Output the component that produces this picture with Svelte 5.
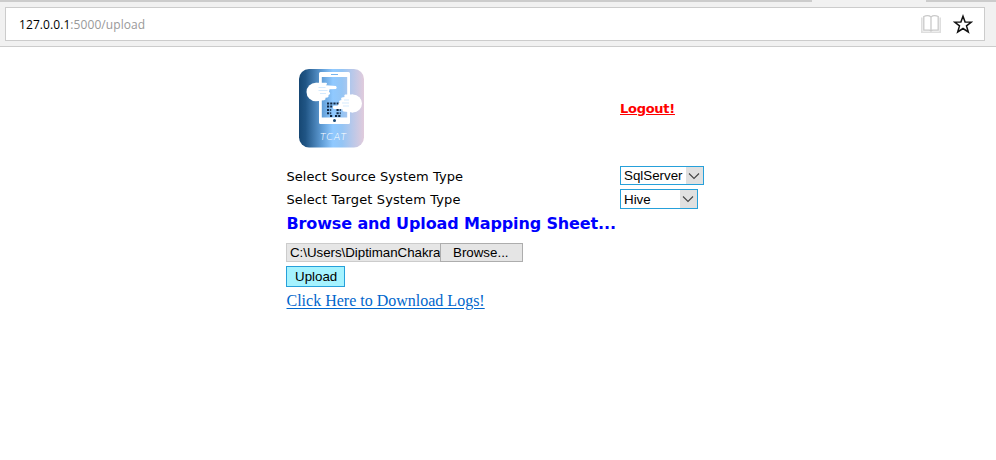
<script>
  const systems = [
    { label: 'Select Source System Type', value: 'SqlServer', kind: 'source' },
    { label: 'Select Target System Type', value: 'Hive', kind: 'target' }
  ];
</script>

<div class="page">
  <header>
    <div class="tabs"><span class="tab"></span></div>
    <div class="address">
      <span class="url"><span class="host">127.0.0.1</span><span class="path">:5000/upload</span></span>
      <svg class="book" width="20" height="20" viewBox="0 0 20 20" fill="none">
        <path d="M.8 3.500v14.700h18.400V3.500" stroke-width="1.600" stroke="#dedede" />
        <path d="M10 3Q8.500 1.700 6.500 1.700T2.800 2.500v13.700h5.500q1.200 0 1.700.8.500-.8 1.700-.8h5.500V2.500q-1.700-.8-3.700-.8T10 3zM10 3v14" stroke-width="1.300" stroke="#c9c9c9" />
      </svg>
      <svg class="star" width="20" height="20" viewBox="0 0 20 20">
        <path d="M10 2.200l2.100 5.700 6.300.2-4.900 3.800 1.800 6.100-5.300-3.500L4.700 18l1.800-6.100-4.900-3.800 6.300-.2z" fill="none" stroke="#111" stroke-width="1.500" />
      </svg>
    </div>
  </header>

  <main>
    <div class="top">
      <svg class="logo" width="65" height="79" viewBox="0 0 65 79">
        <defs>
          <linearGradient id="sheen">
            <stop offset="0" stop-color="#164773" />
            <stop offset=".1" stop-color="#205585" />
            <stop offset=".36" stop-color="#629fd8" />
            <stop offset=".52" stop-color="#90c9ff" />
            <stop offset=".66" stop-color="#94c5f5" />
            <stop offset="1" stop-color="#e1cbdc" />
          </linearGradient>
        </defs>
        <rect width="65" height="78.500" rx="10" fill="url(#sheen)" />
        <path fill-rule="evenodd" d="M21.500 3h28q1.500 0 1.500 1.500v49q0 1.500-1.500 1.500h-28q-1.500 0-1.500-1.500v-49Q20 3 21.500 3zM22.800 8v40.500h25.400V8z" fill="#fff" />
        <path d="M32 5.500h7" stroke="#77b4ed" />
        <circle cx="35.500" cy="51.500" r="1.500" fill="#194875" />
        <g fill="#fff">
          <circle cx="16.800" cy="23" r="9.300" />
          <path d="M17 13.700h10q1 0 1 1.300l-1 1.300 10 .7q1.500 1.800 0 3.100l-6.500.1-.5 2.700q2 .7.500 2.600l-1 .5q.5 2-1 2.500l-2 .2q.5 2-1.500 2.500L17 32z" />
          <circle cx="54" cy="34.500" r="9" />
          <path d="M54 25.500h-8q-1.500 1-.3 2.500l-3 .5q-1.500 1.500 0 2.500l-2 .4q-1.500 1.500 0 2.400l-1.700.5q-1.500 1.500 0 2.500h-4.500q-1.500 1.600 0 3.100l9 .3q-.5 2 1 2.300l9.500 1z" />
        </g>
        <path d="M28 34.400h11.500M28 37.600h5.200M28 41h4.200M28 44.200h4.200M37.500 41h4.200M37.500 44.200h4.200M31 47h2.500M36 47h5.500" stroke="#102641" stroke-width="2" stroke-dasharray="2.200 1" />
        <path d="M19.500 18.500h7M19.500 21.500h9M21 24.500h6M45 31h5M43 34h7M44 37h6" stroke="#b9dcfc" stroke-width=".6" />
        <text x="21" y="70.500" textLength="26">TCAT</text>
      </svg>
      <a class="logout" href="#logout">Logout!</a>
    </div>

    {#each systems as system}
      <div class="row">
        <span class="label {system.kind}-label">{system.label}</span>
        <button class="select {system.kind}">
          <span>{system.value}</span>
          <i><svg width="12" height="8" viewBox="0 0 12 8"><path d="M1 1.500l5 5 5-5" fill="none" stroke="#444" stroke-width="1.100" /></svg></i>
        </button>
      </div>
    {/each}

    <h1>Browse and Upload Mapping Sheet...</h1>
    <div class="file">
      <span class="filename">C:\Users\DiptimanChakra</span>
      <button class="browse">Browse...</button>
    </div>
    <button class="upload">Upload</button>
    <a class="logs" href="#logs">Click Here to Download Logs!</a>
  </main>
</div>

<style>
  :global(body) { margin: 0; background: #fff; }
  .page { width: 996px; height: 460px; overflow: hidden; background: #fff; }
  header { box-sizing: border-box; height: 47px; background: #f1f1f1; border-bottom: 1px solid #ccc; }
  .tabs { height: 2px; background: #ccc; padding-left: 812px; }
  .tab { display: block; width: 114px; height: 2px; background: #f1f1f1; }
  .address { box-sizing: border-box; display: flex; align-items: center; width: 980px; height: 34px; margin: 5px 0 0 5px; padding: 0 11px 0 13px; background: #fff; border: 1px solid #ccc; }
  .url { flex: 1; padding-top: 1px; font: 12px/18px "Open Sans", "Noto Sans", sans-serif; letter-spacing: .08px; }
  .host { color: #000; }
  .path { color: #999; }
  .star { margin-left: 12px; }
  button { box-sizing: border-box; margin: 0; padding: 0; border-radius: 0; color: #000; font: 13.333px/17px "Liberation Sans", Arial, sans-serif; text-align: left; white-space: nowrap; }
  main { display: flex; flex-direction: column; align-items: flex-start; padding: 22px 0 0 286px; }
  .top { display: flex; height: 95px; }
  .logo { margin-left: 13px; }
  .logo text { font: italic 300 10.500px Lato, "Liberation Sans", sans-serif; fill: #fff; }
  .logout { margin: 31px 0 0 256px; color: #f00; font: bold 13px/17px "DejaVu Sans", Verdana, sans-serif; letter-spacing: -.27px; text-underline-offset: 1px; }
  .row { display: flex; align-items: flex-start; height: 23px; padding-top: 2px; box-sizing: border-box; }
  .label { box-sizing: border-box; width: 334px; padding: 2px 0 0 .5px; font: 13px/17px "DejaVu Sans", Verdana, sans-serif; letter-spacing: .04px; }
  .target-label { letter-spacing: .12px; }
  .select { display: flex; justify-content: space-between; width: 84px; height: 19px; padding-left: 3px; border: 1px solid #26a0da; background: #fff; }
  .target { width: 78px; height: 20px; line-height: 19px; }
  .select i { display: flex; align-items: center; justify-content: center; width: 17px; height: 100%; padding-right: 1px; box-sizing: border-box; background: #e0e0e0; }
  h1 { margin: 4px 0 0; height: 29px; padding-left: .5px; color: #00f; font: bold 16px/20px "DejaVu Sans", Verdana, sans-serif; letter-spacing: -.13px; white-space: nowrap; }
  .file { display: flex; height: 19px; }
  .filename { box-sizing: border-box; width: 154px; padding-left: 3px; overflow: hidden; border: 1px solid #ccc; border-right: 0; background: #e6e6e6; color: #000; font: 13.333px/17px "Liberation Sans", Arial, sans-serif; letter-spacing: -.03px; white-space: nowrap; }
  .browse { width: 83px; padding-left: 12px; border: 1px solid #adadad; background: #e5e5e5; }
  .upload { width: 59px; height: 21px; margin-top: 4px; padding-left: 8px; border: 1px solid #26a0da; background: #a5f3ff; }
  .logs { margin-top: 5px; padding-left: .5px; color: #06c; font: 16px/18px "Liberation Serif", "Times New Roman", serif; text-underline-offset: 2px; }
</style>
